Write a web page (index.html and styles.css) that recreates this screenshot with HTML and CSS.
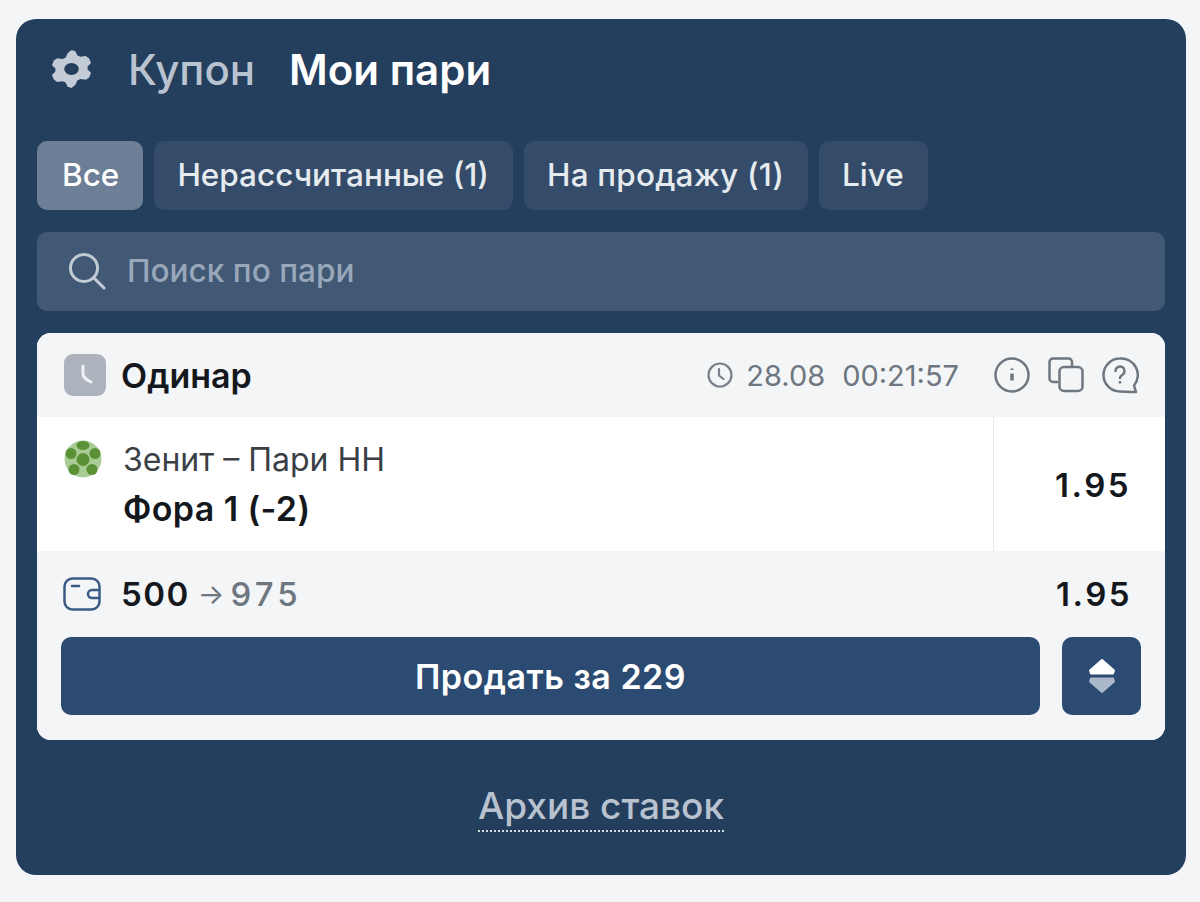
FILE: index.html
```html
<!doctype html>
<html lang="ru">
<head>
  <meta charset="UTF-8">
  <title>Мои пари</title>
  <link rel="stylesheet" href="styles.css">
</head>
<body>
<div class="panel">
  <div class="head">
    <svg class="gear" viewBox="4 1 32 38" preserveAspectRatio="none">
      <path fill="#c3ccd6" fill-rule="evenodd" d="M20 1l3.200 1.200 1.600 4.200 2.500 1.400 4.400-.7 2.800 2.300 1.500 4.700-2.800 3.400v2.900l2.800 3.400-1.500 4.700-2.800 2.300-4.400-.7-2.500 1.400-1.600 4.200L20 39l-3.200-1.200-1.600-4.200-2.500-1.400-4.400.7L5.500 30.600 4 25.900l2.800-3.400v-2.900L4 16.200l1.500-4.700 2.800-2.300 4.400.7 2.500-1.400 1.600-4.200zM20 14a6 6 0 1 0 0 12a6 6 0 0 0 0-12z"/>
      <circle cx="20" cy="20" r="4" fill="#243e5e"/>
    </svg>
    <span class="head-link">Купон</span>
    <span class="head-active">Мои пари</span>
  </div>

  <div class="tabs">
    <div class="tab tab-active">Все</div>
    <div class="tab">Нерассчитанные (1)</div>
    <div class="tab tab-sale">На продажу (1)</div>
    <div class="tab">Live</div>
  </div>

  <div class="search">
    <svg class="search-icon" viewBox="0 0 38 38" fill="none" stroke="#c3ccd6" stroke-width="3" stroke-linecap="round">
      <circle cx="16" cy="16" r="13.500"/>
      <path d="M26 26l10 10"/>
    </svg>
    <span>Поиск по пари</span>
  </div>

  <div class="bet">
    <div class="bet-head">
      <div class="bet-type">
        <div class="type-icon">
          <svg viewBox="0 0 42 42" fill="none" stroke="#eef0f3" stroke-width="3" stroke-linecap="round"><path d="M19 12v8c0 4 4 6 8 8"/></svg>
        </div>
        <span>Одинар</span>
      </div>
      <div class="bet-meta">
        <svg class="clock" viewBox="0 0 26 26" fill="none" stroke="#7a818a" stroke-width="2.200" stroke-linecap="round"><circle cx="13" cy="13" r="11.500"/><path d="M12 7v6.500l4.500 3.500"/></svg>
        <span class="meta-date">28.08</span>
        <span>00:21:57</span>
      </div>
      <div class="bet-actions">
        <svg viewBox="0 0 38 38" fill="none" stroke="#6e7680" stroke-width="2.500"><circle cx="19" cy="19" r="16.500"/><path d="M19 17.500v7" stroke-width="3.500"/><path d="M19 12.500v1.500" stroke-width="3"/></svg>
        <svg viewBox="0 0 38 38" fill="none" stroke="#6e7680" stroke-width="2.500"><path d="M11 26H6a3.500 3.500 0 0 1-3.500-3.500V6A3.500 3.500 0 0 1 6 2.500h15A3.500 3.500 0 0 1 25 6v5"/><rect x="12.500" y="11" width="23" height="24" rx="4.500"/></svg>
        <svg viewBox="0 0 38 38" fill="none" stroke="#6e7680" stroke-width="2.500" stroke-linejoin="round"><path d="M19 2.500a16.500 16.500 0 1 0 0 33c4 0 9 .5 16 .5l-2-6.500a16.500 16.500 0 0 0-14-27z"/><path d="M14.500 15a4.500 4.500 0 1 1 7 3.700c-1.500 1-2.500 1.800-2.500 3.300" stroke-linecap="round"/><path d="M19 25v2.500"/></svg>
      </div>
    </div>

    <div class="bet-row">
      <div class="bet-info">
        <svg class="ball" viewBox="0 0 38 38">
          <circle cx="19" cy="19" r="18.500" fill="#a9cb94"/>
          <g fill="#5a9137">
            <circle cx="19" cy="19.500" r="6.500"/>
            <ellipse cx="19" cy="5.500" rx="6.500" ry="4.500"/>
            <circle cx="31" cy="13.500" r="5.500"/>
            <circle cx="28" cy="29.500" r="5.500"/>
            <circle cx="10" cy="29.500" r="5.500"/>
            <circle cx="7" cy="13.500" r="5.500"/>
          </g>
        </svg>
        <div>
          <div class="match">Зенит – Пари НН</div>
          <div class="market">Фора 1 (-2)</div>
        </div>
      </div>
      <div class="odds">1.95</div>
    </div>

    <div class="bet-foot">
      <div class="stake-row">
        <div class="stake">
          <svg class="wallet" viewBox="0 0 38 34" fill="none" stroke="#3b5a85" stroke-width="2.500" stroke-linecap="round">
            <rect x="1.500" y="1.500" width="35" height="31" rx="8"/>
            <path d="M9 9h7"/>
            <path d="M36 13h-7a4 4 0 0 0 0 8h7"/>
          </svg>
          <span class="stake-sum">500</span>
          <span class="stake-arrow">→</span>
          <span class="stake-win">975</span>
        </div>
        <div class="stake-odds">1.95</div>
      </div>
      <div class="buttons">
        <div class="sell">Продать за 229</div>
        <div class="sort">
          <svg viewBox="0 0 28 36"><path fill="#fff" stroke="#fff" stroke-width="2" stroke-linejoin="round" d="M14 2L26 12.500 25 15.500H3L2 12.500z"/><path fill="#a9b8ca" stroke="#a9b8ca" stroke-width="2" stroke-linejoin="round" d="M3 20.500h22L26 23.500 14 34 2 23.500z"/></svg>
        </div>
      </div>
    </div>
  </div>

  <div class="archive-wrap">
    <span class="archive">Архив ставок</span>
  </div>
</div>
</body>
</html>
```

FILE: styles.css
```css
* {
  box-sizing: border-box;
}
html, body {
  height: 100%;
}
body {
  margin: 0;
  padding: 19px 14px 27px 16px;
  background-color: #f3f5f7;
  font-family: Inter, "Liberation Sans", sans-serif;
}
.panel {
  height: 856px;
  padding: 0 21px;
  background-color: #243e5e;
  border-radius: 20px;
}

.head {
  display: flex;
  align-items: center;
  height: 103px;
  padding: 0 0 3px 15px;
}
.gear {
  width: 39px;
  height: 38px;
  margin-right: 37px;
}
.head-link {
  font-size: 42px;
  font-weight: 500;
  color: #b9c3cf;
  margin-right: 34px;
}
.head-active {
  font-size: 42px;
  font-weight: 600;
  color: white;
}

.tabs {
  display: flex;
  gap: 11px;
  margin-top: 19px;
}
.tab {
  height: 69px;
  padding: 0 24px 3px 23px;
  display: flex;
  align-items: center;
  background-color: #344c69;
  border-radius: 10px;
  font-size: 31.5px;
  font-weight: 500;
  color: #e6ebf0;
}
.tab-active {
  padding-left: 25px;
  background-color: #6d7f96;
  color: white;
}
.tab-sale {
  letter-spacing: .2px;
}

.search {
  display: flex;
  align-items: center;
  height: 79px;
  margin-top: 22px;
  padding: 0 31px 2px;
  background-color: #415975;
  border-radius: 10px;
  font-size: 31.6px;
  font-weight: 500;
  color: #98a7b9;
}
.search-icon {
  width: 38px;
  height: 38px;
  margin-right: 21px;
}

.bet {
  margin-top: 22px;
  background-color: white;
  border-radius: 14px;
  overflow: hidden;
}
.bet-head {
  display: flex;
  align-items: center;
  height: 84px;
  padding: 0 26px 0 27px;
  background-color: #f3f5f7;
}
.bet-type {
  display: flex;
  align-items: center;
  flex: 1;
  font-size: 34px;
  font-weight: 600;
  color: #14181d;
}
.type-icon {
  width: 42px;
  height: 42px;
  margin-right: 15px;
  background-color: #adb3bd;
  border-radius: 9px;
}
.bet-meta {
  display: flex;
  align-items: center;
  font-size: 29px;
  color: #6e7680;
}
.clock {
  width: 26px;
  height: 26px;
  margin-right: 13px;
}
.meta-date {
  margin-right: 17px;
}
.bet-actions {
  display: flex;
  gap: 16px;
  margin-left: 34px;
}
.bet-actions svg {
  width: 38px;
  height: 38px;
}

.bet-row {
  display: flex;
  height: 134px;
}
.bet-info {
  flex: 1;
  display: flex;
  padding: 24px 0 0 27px;
  border-right: 1px solid #e8ebee;
}
.ball {
  width: 38px;
  height: 38px;
  margin: -1px 21px 0 0;
}
.match {
  font-size: 32px;
  line-height: 38px;
  color: #3a3f46;
}
.market {
  margin-top: 11px;
  font-size: 34px;
  line-height: 38px;
  font-weight: 600;
  letter-spacing: .4px;
  color: #14181d;
}
.odds {
  width: 171px;
  padding: 2px 34px 0 0;
  align-self: center;
  text-align: right;
  font-size: 33px;
  font-weight: 600;
  letter-spacing: 2.5px;
  color: #14181d;
}

.bet-foot {
  height: 189px;
  padding: 0 24px;
  background-color: #f3f5f7;
}
.stake-row {
  display: flex;
  justify-content: space-between;
  align-items: center;
  height: 86px;
}
.stake {
  display: flex;
  align-items: center;
  font-size: 33px;
  font-weight: 600;
  letter-spacing: 1.5px;
}
.wallet {
  width: 38px;
  height: 34px;
  margin: 0 20px 0 2px;
}
.stake-sum {
  color: #14181d;
}
.stake-arrow {
  margin: 0 6px 0 8px;
  font-size: 28px;
  font-weight: 400;
  letter-spacing: 0;
  color: #6e7680;
}
.stake-win {
  font-weight: 500;
  letter-spacing: 4px;
  color: #6e7680;
}
.stake-odds {
  padding-right: 9px;
  font-size: 33px;
  font-weight: 600;
  letter-spacing: 2.5px;
  color: #14181d;
}
.buttons {
  display: flex;
  gap: 22px;
}
.sell {
  flex: 1;
  height: 78px;
  display: flex;
  align-items: center;
  justify-content: center;
  background-color: #2b4b73;
  border-radius: 10px;
  font-size: 34px;
  font-weight: 600;
  letter-spacing: .5px;
  color: white;
}
.sort {
  width: 79px;
  height: 78px;
  display: flex;
  align-items: center;
  justify-content: center;
  background-color: #2b4b73;
  border-radius: 10px;
}
.sort svg {
  width: 28px;
  height: 36px;
}

.archive-wrap {
  margin-top: 43px;
  text-align: center;
}
.archive {
  padding-bottom: 2px;
  border-bottom: 2px dotted #d3dae2;
  font-size: 37px;
  font-weight: 500;
  color: #b9c3cf;
}
```
